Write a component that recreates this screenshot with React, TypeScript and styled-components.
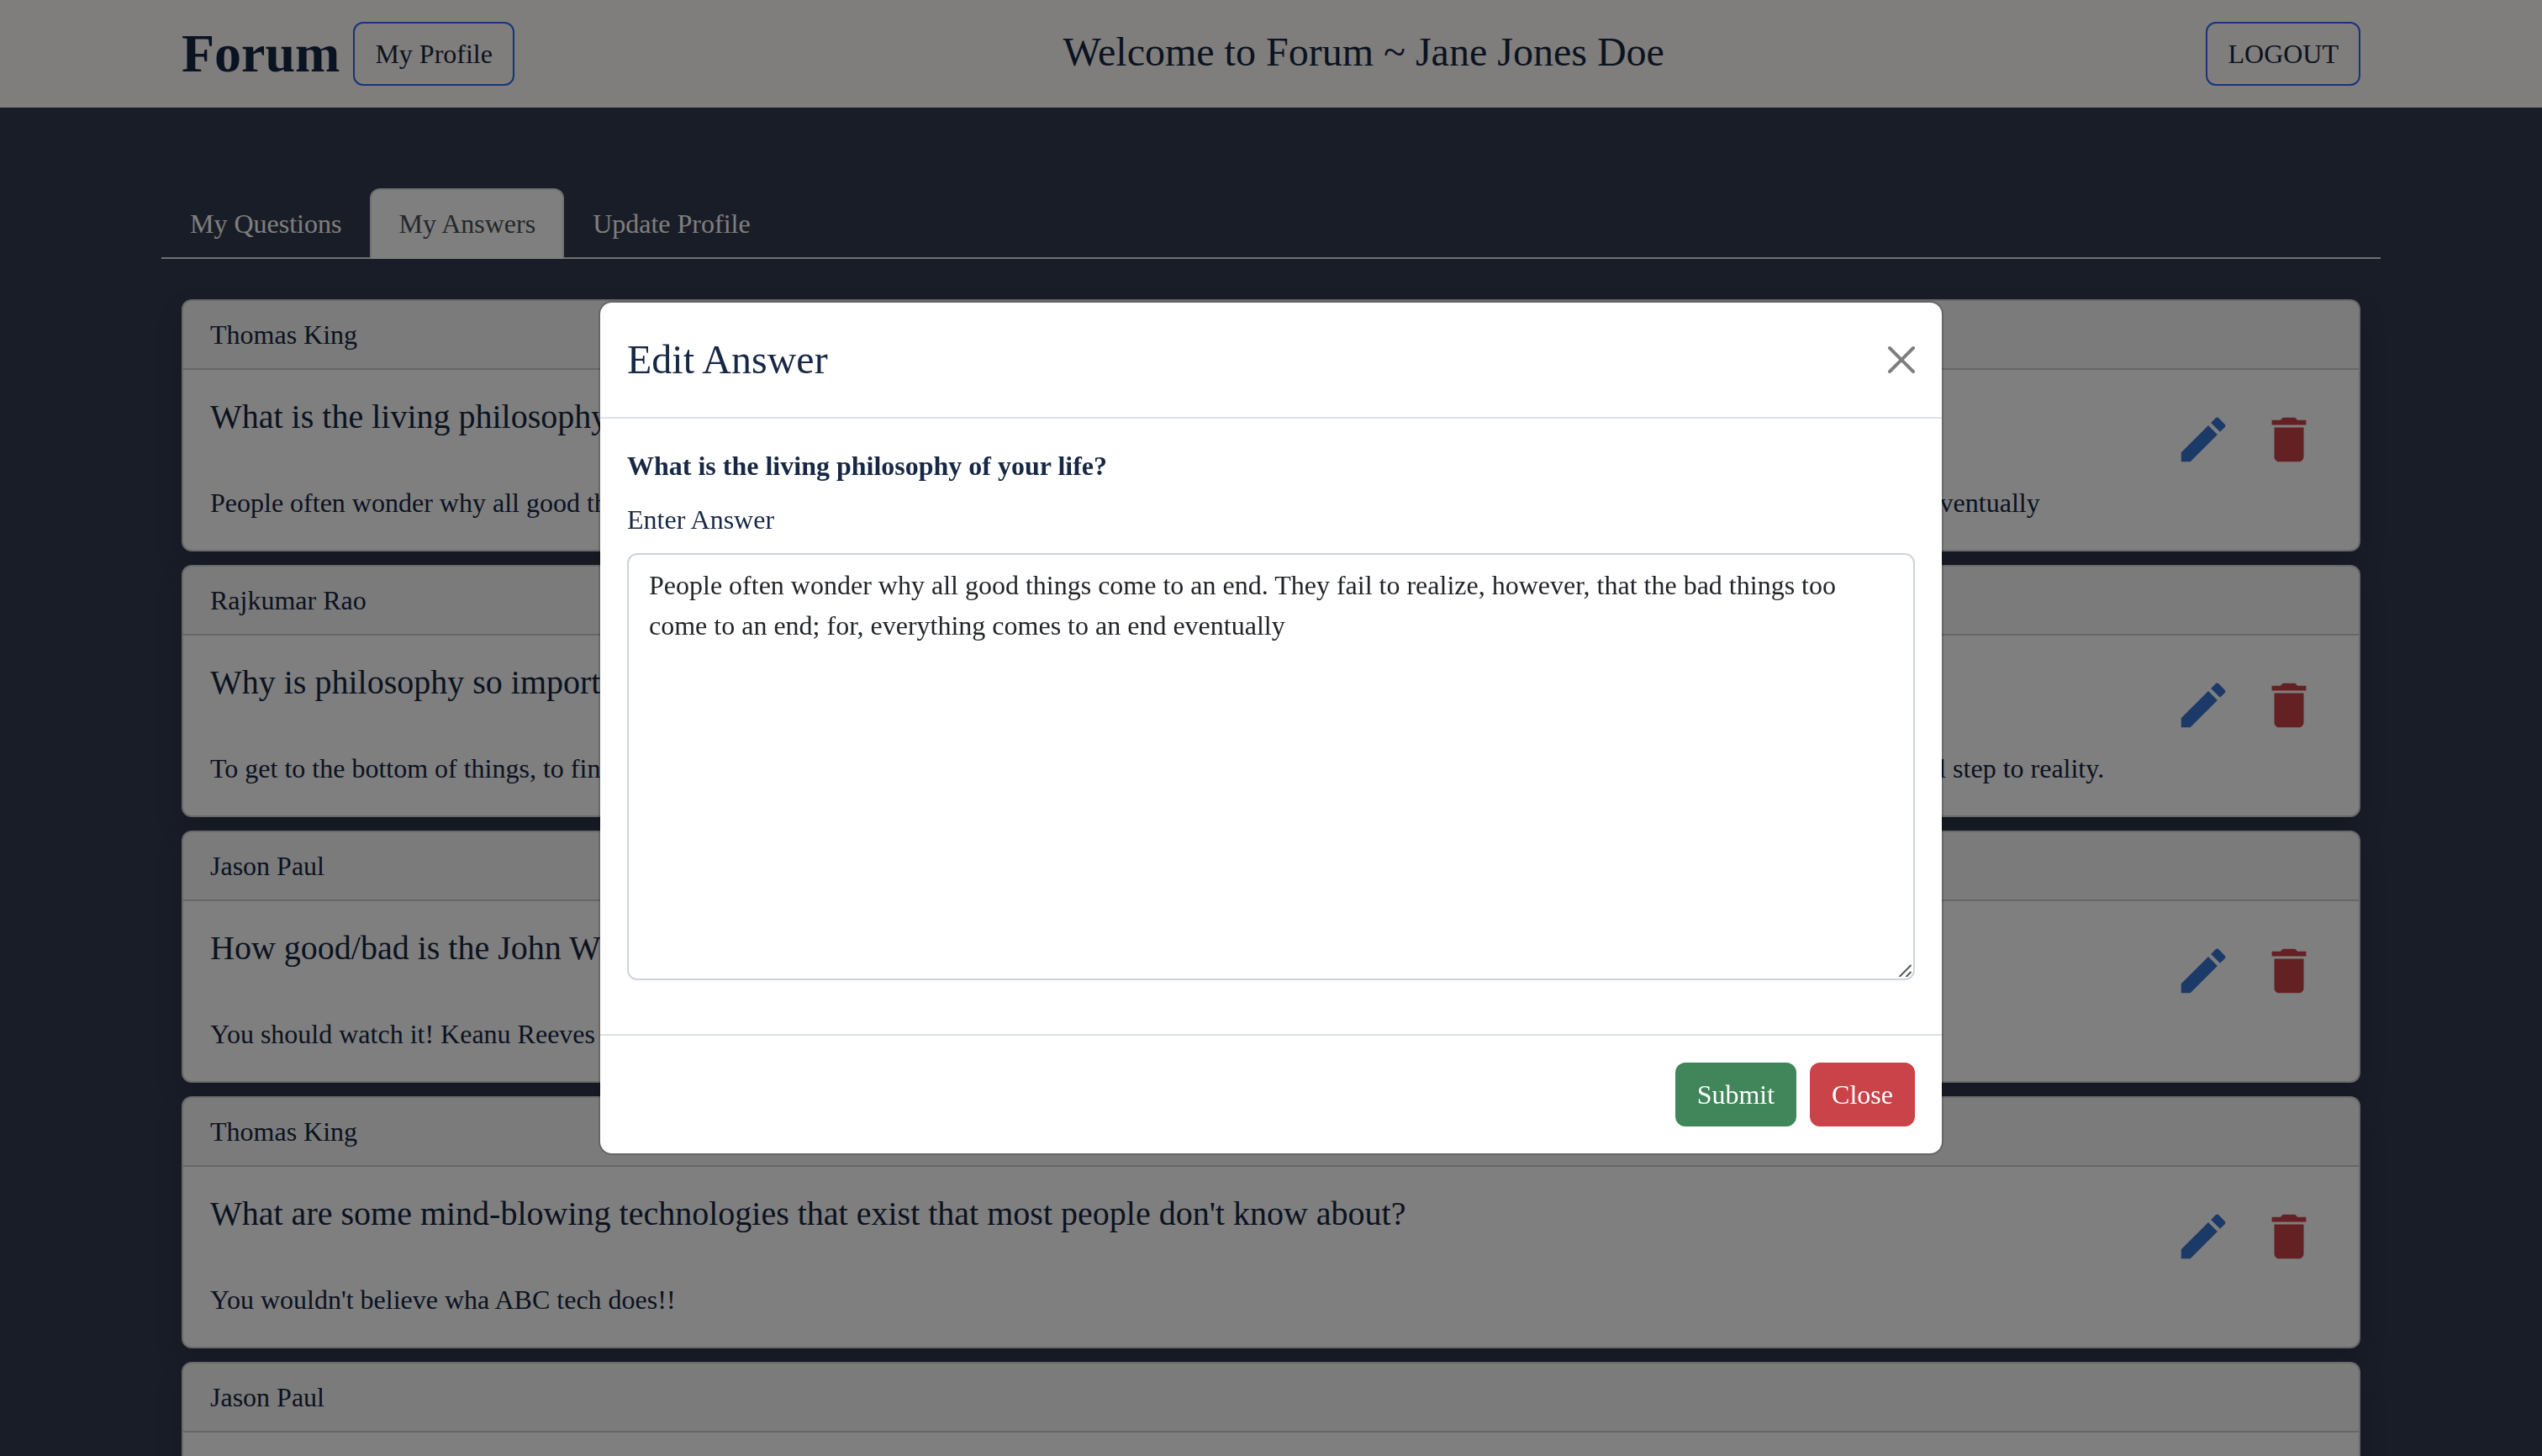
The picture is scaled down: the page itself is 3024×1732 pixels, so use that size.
import React, { useState } from "react";
import styled, { createGlobalStyle } from "styled-components";
import { MdDelete, MdEdit } from "react-icons/md";

const color = {
  page: "#323a50",
  cream: "#fffcf8",
  navy: "#172845",
  navyDim: "#152642",
  line: "#dee2e6",
  blue: "#3874d0",
  red: "#c94349",
  green: "#41865a",
  outline: "#2e68f5",
};

const GlobalStyle = createGlobalStyle`
  *, *::before, *::after { box-sizing: border-box; }
  body {
    margin: 0;
    overflow: hidden;
    background: ${color.page};
    color: ${color.navyDim};
    font-family: "Liberation Serif", "Times New Roman", serif;
    font-size: 32px;
    line-height: 48px;
  }
  h1, h2, h3, p { margin: 0; font-weight: 400; }
  button, textarea { font: inherit; }
`;

const Container = styled.div`
  max-width: 2640px;
  margin: 0 auto;
  padding: 0 24px;
`;

const Header = styled.header`
  background: ${color.cream};
  padding: 16px 0;
`;

const HeaderRow = styled(Container)`
  display: flex;
  align-items: center;
  justify-content: space-between;
`;

const BrandGroup = styled.div`
  display: flex;
  align-items: center;
  gap: 16px;
`;

const Brand = styled.a`
  color: inherit;
  font-size: 64px;
  line-height: 96px;
  font-weight: 700;
  text-decoration: none;
`;

const Welcome = styled.h1`
  font-size: 48px;
  line-height: 56px;
  padding: 0 0 4px 8px;
`;

const Button = styled.button<{ $fill?: string }>`
  padding: 12px 24px;
  border: 2px solid ${(p) => p.$fill ?? color.outline};
  border-radius: 12px;
  background: ${(p) => p.$fill ?? "transparent"};
  color: ${(p) => (p.$fill ? "#fff" : "inherit")};
  cursor: pointer;
`;

const Tabs = styled.nav`
  display: flex;
  max-width: 2640px;
  margin: 96px auto 48px;
  border-bottom: 2px solid ${color.line};
`;

const Tab = styled.a<{ $active?: boolean }>`
  padding: 16px 32px;
  margin-bottom: -2px;
  border: 2px solid transparent;
  border-radius: 12px 12px 0 0;
  color: ${color.cream};
  text-decoration: none;
  ${(p) =>
    p.$active &&
    `
    background: #fff;
    color: #495057;
    border-color: ${color.line} ${color.line} #fff;
  `}
`;

const AnswerList = styled(Container)`
  display: flex;
  flex-direction: column;
  gap: 16px;
`;

const Card = styled.article`
  border: 2px solid rgba(0, 0, 0, 0.175);
  border-radius: 12px;
  background: #fff;
  background-clip: border-box;
  box-shadow: 0 16px 32px rgba(0, 0, 0, 0.15);
`;

const CardHeader = styled.header`
  padding: 16px 32px;
  border-bottom: 2px solid rgba(0, 0, 0, 0.175);
  border-radius: 10px 10px 0 0;
  background: rgba(0, 0, 0, 0.03);
`;

const CardBody = styled.div`
  padding: 32px;
`;

const CardTop = styled.div`
  display: flex;
  align-items: flex-start;
  justify-content: space-between;
`;

const Question = styled.h2`
  font-size: 40px;
  line-height: 48px;
`;

const Actions = styled.div`
  display: flex;
`;

const IconButton = styled.button<{ $tone: string }>`
  display: flex;
  padding: 16px;
  border: 0;
  background: none;
  color: ${(p) => p.$tone};
  cursor: pointer;
`;

const Backdrop = styled.div`
  position: fixed;
  inset: 0;
  display: flex;
  align-items: center;
  justify-content: center;
  background: rgba(0, 0, 0, 0.5);
`;

const Dialog = styled.form`
  width: 100%;
  max-width: 1600px;
  border: 2px solid rgba(0, 0, 0, 0.175);
  border-radius: 16px;
  background: #fff;
  background-clip: padding-box;
  color: ${color.navy};
`;

const DialogHeader = styled.header`
  display: flex;
  align-items: center;
  justify-content: space-between;
  padding: 32px;
  border-bottom: 2px solid ${color.line};
`;

const DialogTitle = styled.h2`
  font-size: 48px;
  line-height: 72px;
`;

const CloseIconButton = styled.button`
  display: flex;
  padding: 0;
  border: 0;
  background: none;
  color: #000;
  opacity: 0.5;
  cursor: pointer;
`;

const DialogBody = styled.div`
  display: flex;
  flex-direction: column;
  gap: 16px;
  padding: 32px 32px 64px;
`;

const DialogQuestion = styled.h3`
  font-size: 32px;
  font-weight: 700;
`;

const Field = styled.div`
  position: relative;
  display: flex;
`;

const TextArea = styled.textarea`
  flex: 1;
  padding: 12px 24px;
  border: 2px solid #ced4da;
  border-radius: 12px;
  background: #fff;
  color: #212529;
  resize: none;
  outline: 0;
`;

const Grip = styled.svg`
  position: absolute;
  right: 4px;
  bottom: 4px;
  pointer-events: none;
`;

const DialogFooter = styled.footer`
  display: flex;
  justify-content: flex-end;
  gap: 16px;
  padding: 32px;
  border-top: 2px solid ${color.line};
`;

const answers = [
  {
    author: "Thomas King",
    question: "What is the living philosophy of your life?",
    answer:
      "People often wonder why all good things come to an end. They fail to realize, however, that the bad things too come to an end; for, everything comes to an end eventually",
  },
  {
    author: "Rajkumar Rao",
    question: "Why is philosophy so important?",
    answer:
      "To get to the bottom of things, to find out the truths about the world and about ourselves, we want to ask the right questions. Philosophy is the first and most vital step to reality.",
  },
  {
    author: "Jason Paul",
    question: "How good/bad is the John Wick movie?",
    answer: "You should watch it! Keanu Reeves is amazing in it.",
  },
  {
    author: "Thomas King",
    question: "What are some mind-blowing technologies that exist that most people don't know about?",
    answer: "You wouldn't believe wha ABC tech does!!",
  },
  {
    author: "Jason Paul",
    question: "What is the best way to learn programming?",
    answer: "Practice every day and build small projects.",
  },
];

const tabs = ["My Questions", "My Answers", "Update Profile"];

function AnswerCard({ author, question, answer }: (typeof answers)[number]) {
  return (
    <Card>
      <CardHeader>{author}</CardHeader>
      <CardBody>
        <CardTop>
          <Question>{question}</Question>
          <Actions>
            <IconButton type="button" $tone={color.blue} aria-label="Edit answer">
              <MdEdit size={70} />
            </IconButton>
            <IconButton type="button" $tone={color.red} aria-label="Delete answer">
              <MdDelete size={70} />
            </IconButton>
          </Actions>
        </CardTop>
        <p>{answer}</p>
      </CardBody>
    </Card>
  );
}

function EditDialog() {
  const [text, setText] = useState(answers[0].answer);
  return (
    <Backdrop>
      <Dialog role="dialog" aria-modal="true" aria-labelledby="edit-title" onSubmit={(e) => e.preventDefault()}>
        <DialogHeader>
          <DialogTitle id="edit-title">Edit Answer</DialogTitle>
          <CloseIconButton type="button" aria-label="Close dialog">
            <svg width="32" height="32" viewBox="0 0 16 16" fill="currentColor">
              <path d="M.293.293a1 1 0 0 1 1.414 0L8 6.586 14.293.293a1 1 0 1 1 1.414 1.414L9.414 8l6.293 6.293a1 1 0 0 1-1.414 1.414L8 9.414l-6.293 6.293a1 1 0 0 1-1.414-1.414L6.586 8 .293 1.707a1 1 0 0 1 0-1.414z" />
            </svg>
          </CloseIconButton>
        </DialogHeader>
        <DialogBody>
          <DialogQuestion>{answers[0].question}</DialogQuestion>
          <label htmlFor="answer">Enter Answer</label>
          <Field>
            <TextArea id="answer" rows={10} value={text} onChange={(e) => setText(e.target.value)} />
            <Grip width="18" height="20" viewBox="0 0 18 20" stroke="#555" strokeWidth="2" aria-hidden="true">
              <path d="M3.5 20 17.5 6M11.5 20l6-6" />
            </Grip>
          </Field>
        </DialogBody>
        <DialogFooter>
          <Button type="submit" $fill={color.green}>
            Submit
          </Button>
          <Button type="button" $fill={color.red}>
            Close
          </Button>
        </DialogFooter>
      </Dialog>
    </Backdrop>
  );
}

export default function App() {
  return (
    <>
      <GlobalStyle />
      <Header>
        <HeaderRow>
          <BrandGroup>
            <Brand href="#home">Forum</Brand>
            <Button type="button">My Profile</Button>
          </BrandGroup>
          <Welcome>Welcome to Forum ~ Jane Jones Doe</Welcome>
          <Button type="button">LOGOUT</Button>
        </HeaderRow>
      </Header>
      <main>
        <Tabs>
          {tabs.map((name) => (
            <Tab key={name} href="#tab" $active={name === "My Answers"}>
              {name}
            </Tab>
          ))}
        </Tabs>
        <AnswerList>
          {answers.map((item) => (
            <AnswerCard key={item.question} {...item} />
          ))}
        </AnswerList>
      </main>
      <EditDialog />
    </>
  );
}
